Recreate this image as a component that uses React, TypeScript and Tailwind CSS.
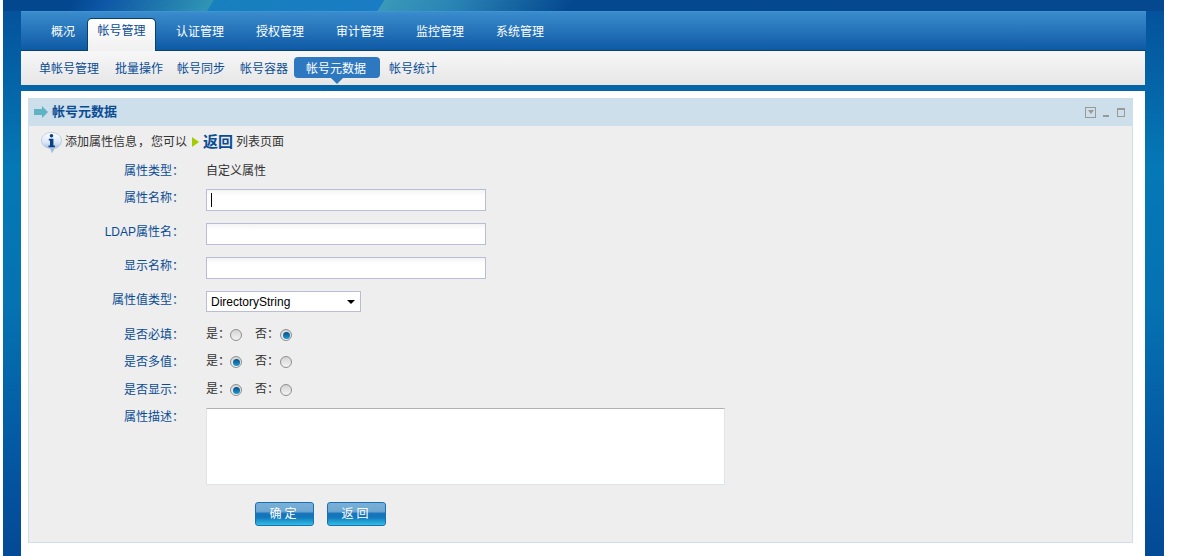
import React from 'react';

const mainTabs = ['认证管理', '授权管理', '审计管理', '监控管理', '系统管理'];

const Row = ({ label, className, children }: { label: string; className: string; children: React.ReactNode }) => (
    <div className={`flex ${className}`}>
        <div className="w-[155px] pt-px text-right text-[#0a4c94] leading-[16px]">{label}：</div>
        <div className="ml-[22px] text-[#333333]">{children}</div>
    </div>
);

const Radio = ({ checked }: { checked?: boolean }) => (
    <span className="inline-flex w-[12px] h-[12px] rounded-full border border-[#8f8f8f] bg-gradient-to-b from-[#d4d4d4] to-[#f4f4f4] items-center justify-center">
        {checked && <span className="w-[7px] h-[7px] rounded-full bg-gradient-to-b from-[#0a4f86] to-[#1c9ad6]" />}
    </span>
);

const YesNo = ({ yes }: { yes: boolean }) => (
    <div className="flex items-center h-[16px] leading-[16px]">
        <span>是：</span>
        <span className="mt-[2px] flex"><Radio checked={yes} /></span>
        <span className="ml-[13px]">否：</span>
        <span className="ml-px mt-[2px] flex"><Radio checked={!yes} /></span>
    </div>
);

const TextInput = ({ caret }: { caret?: boolean }) => (
    <div className="w-[280px] h-[22px] border border-[#b9bdd6] bg-gradient-to-b from-[#f4f4f4] to-white to-30% flex items-center px-[4px]">
        {caret && <span className="w-px h-[14px] bg-black" />}
    </div>
);

const Btn = ({ text, className }: { text: string; className?: string }) => (
    <button className={`w-[59px] h-[24px] rounded-[3px] border border-[#1a6fb8] text-white text-[12px] tracking-[3px] bg-[linear-gradient(to_bottom,#7bb0d6_0%,#6fa8d2_38%,#1a74ba_48%,#1276bb_65%,#2fc0e4_100%)] ${className ?? ''}`}>
        {text}
    </button>
);

export default function App() {
    return (
        <div className="h-[556px] overflow-hidden bg-white text-[12px] font-['Liberation_Sans','Noto_Sans_CJK_SC',sans-serif]">
            <div className="ml-[3px] w-[1161px] h-full bg-[linear-gradient(to_bottom,#04509a_0%,#0578b6_30%,#0572b2_55%,#04509c_90%,#044a96_100%)]">
                <div className="h-[11px] bg-[linear-gradient(122deg,#03488e_0%,#03488e_6%,#0d55a5_8.600%,#3095b5_18%,#1780bd_18.100%,#1a7cc4_32.600%,#3a98b8_32.700%,#2a85b5_38.600%,#04488f_48.900%,#05488f_100%)]" />
                <div className="ml-[18px] w-[1125px] flex flex-col">
                    <div className="h-[40px] flex pl-[18px] items-end border-t border-[#3f94d4] border-b border-b-[#0b4069] bg-gradient-to-b from-[#3a8ccd] to-[#0d5aa5]">
                        <div className="w-[48px] h-[38px] leading-[40px] text-center text-white">概况</div>
                        <div className="w-[69px] h-[33px] leading-[24px] text-center text-[#0a4c94] rounded-t-[5px] border border-b-0 border-[#0b4069] bg-gradient-to-b from-white to-[#f0f0f0] mb-[-1px]">帐号管理</div>
                        <div className="flex ml-[4px]">
                            {mainTabs.map((t) => (
                                <div key={t} className="w-[80px] h-[38px] leading-[40px] text-center text-white">{t}</div>
                            ))}
                        </div>
                    </div>
                    <div className="w-[1124px] h-[34px] flex items-start pl-[18px] pt-[6px] bg-gradient-to-b from-[#f7f7f7] to-[#e6e6e6] text-[#0a4c94] leading-[25px]">
                        <span className="mr-[16px]">单帐号管理</span>
                        <span className="mr-[14px]">批量操作</span>
                        <span className="mr-[15px]">帐号同步</span>
                        <span className="mr-[6px]">帐号容器</span>
                        <span className="relative w-[86px] h-[21px] rounded-[4px] bg-[#2d78bf] text-white pl-[12px] mr-[9px]">
                            帐号元数据
                            <span className="absolute left-[37px] top-[21px] w-0 h-0 border-x-[6px] border-x-transparent border-t-[6px] border-t-[#2d78bf]" />
                        </span>
                        <span>帐号统计</span>
                    </div>
                    <div className="h-[6px]" />
                    <div className="w-[1124px] h-[465px] bg-white px-[7px] pt-[7px]">
                        <div className="w-[1105px] h-[445px] border border-t-0 border-[#cddfeb] bg-[#eeeeee]">
                            <div className="h-[28px] -mx-px bg-[#cddfeb] flex items-center pl-[6px]">
                                <svg width="14" height="12" viewBox="0 0 14 12" className="mr-[4px]">
                                    <path d="M0 3h8V0l6 6-6 6V9H0z" fill="#5fb4c4" />
                                </svg>
                                <span className="text-[13px] font-bold text-[#0a4c94]">帐号元数据</span>
                                <div className="ml-auto mr-[8px] flex items-center">
                                    <span className="w-[11px] h-[11px] border border-[#999999] flex items-center justify-center">
                                        <span className="w-0 h-0 border-x-[3px] border-x-transparent border-t-[4px] border-t-[#999999]" />
                                    </span>
                                    <span className="ml-[7px] mt-[7px] w-[6px] h-[2px] bg-[#999999]" />
                                    <span className="ml-[8px] w-[8px] h-[9px] border border-[#999999] border-t-2" />
                                </div>
                            </div>
                            <div className="h-[32px] flex items-center pl-[12px] text-[#333333]">
                                <svg width="21" height="21" viewBox="0 0 21 21" className="mr-[3px]">
                                    <defs>
                                        <linearGradient id="bub" x1="0" y1="0" x2="0" y2="1">
                                            <stop offset="0" stopColor="#ffffff" />
                                            <stop offset="0.5" stopColor="#dbe7f5" />
                                            <stop offset="1" stopColor="#7fa6d8" />
                                        </linearGradient>
                                    </defs>
                                    <path d="M10.500 .5C16 .5 20.500 3.800 20.500 8.500S16.500 16 13.500 16.300L11 20.500 9.500 16.400C5 16.200.500 13 .500 8.500S5 .5 10.500 .5z" fill="url(#bub)" stroke="#9dbbdc" strokeWidth="0.6" />
                                    <circle cx="10.500" cy="3.800" r="1.800" fill="#0a3f86" />
                                    <path d="M7.800 6.800h4.600v6.800h1.500v1.600H7.500v-1.600h1.500V8.400H7.800z" fill="#0a3f86" />
                                </svg>
                                <span>添加属性信息<span className="mx-px">，</span>您可以</span>
                                <span className="ml-[5px] mr-[4px] w-0 h-0 border-y-[5px] border-y-transparent border-l-[7px] border-l-[#a4cc00]" />
                                <span className="text-[15px] font-bold text-[#0a4c94]">返回</span>
                                <span className="ml-[3px]">列表页面</span>
                            </div>
                            <div className="flex flex-col">
                                <Row label="属性类型" className="h-[31px] pt-[4px]"><div className="pt-px leading-[16px]">自定义属性</div></Row>
                                <Row label="属性名称" className="h-[34px]"><TextInput caret /></Row>
                                <Row label="LDAP属性名" className="h-[34px]"><TextInput /></Row>
                                <Row label="显示名称" className="h-[34px]"><TextInput /></Row>
                                <Row label="属性值类型" className="h-[35px]">
                                    <div className="w-[155px] h-[21px] border border-[#b9bdd6] bg-white flex items-center justify-between pl-[4px] pr-[5px] text-black">
                                        <span>DirectoryString</span>
                                        <span className="w-0 h-0 border-x-[4px] border-x-transparent border-t-[4px] border-t-black" />
                                    </div>
                                </Row>
                                <Row label="是否必填" className="h-[27px]"><YesNo yes={false} /></Row>
                                <Row label="是否多值" className="h-[28px]"><YesNo yes /></Row>
                                <Row label="是否显示" className="h-[27px]"><YesNo yes /></Row>
                                <Row label="属性描述" className="h-[94px]">
                                    <div className="w-[519px] h-[77px] border border-[#dfe3ea] border-t-[#b0b0b0] bg-white" />
                                </Row>
                                <div className="flex pl-[226px]">
                                    <Btn text="确定" />
                                    <Btn text="返回" className="ml-[13px]" />
                                </div>
                            </div>
                        </div>
                    </div>
                </div>
            </div>
        </div>
    );
}
